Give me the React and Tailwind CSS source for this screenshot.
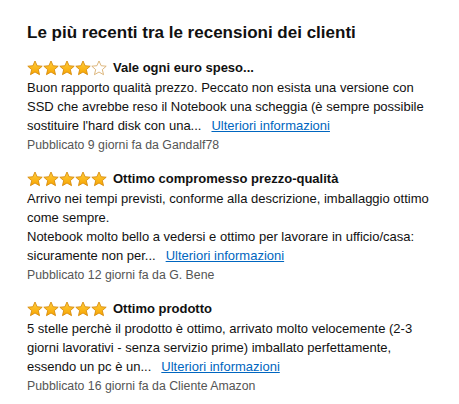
import React from 'react';

const reviews = [
  {
    rating: 4,
    title: 'Vale ogni euro speso...',
    lines: [
      'Buon rapporto qualità prezzo. Peccato non esista una versione con',
      "SSD che avrebbe reso il Notebook una scheggia (è sempre possibile",
      "sostituire l'hard disk con una...",
    ],
    meta: 'Pubblicato 9 giorni fa da Gandalf78',
  },
  {
    rating: 5,
    title: 'Ottimo compromesso prezzo-qualità',
    lines: [
      'Arrivo nei tempi previsti, conforme alla descrizione, imballaggio ottimo',
      'come sempre.',
      'Notebook molto bello a vedersi e ottimo per lavorare in ufficio/casa:',
      'sicuramente non per...',
    ],
    meta: 'Pubblicato 12 giorni fa da G. Bene',
  },
  {
    rating: 5,
    title: 'Ottimo prodotto',
    lines: [
      '5 stelle perchè il prodotto è ottimo, arrivato molto velocemente (2-3',
      'giorni lavorativi - senza servizio prime) imballato perfettamente,',
      'essendo un pc è un...',
    ],
    meta: 'Pubblicato 16 giorni fa da Cliente Amazon',
  },
];

const Star = ({ filled }) => (
  <svg width="16" height="16" viewBox="0 0 24 24" className="block">
    <defs>
      <linearGradient id="sg" x1="0" y1="0" x2="0" y2="1">
        <stop offset="0" stopColor="#ffce3d" />
        <stop offset="1" stopColor="#f7a400" />
      </linearGradient>
    </defs>
    <path
      d="M12 1.5l3.2 7.1 7.6.7-5.8 5.1 1.8 7.6L12 18l-6.8 4 1.8-7.6-5.8-5.1 7.6-.7z"
      fill={filled ? 'url(#sg)' : '#ffffff'}
      stroke={filled ? '#d58a0c' : '#d8ab6a'}
      strokeWidth="1.3"
      strokeLinejoin="round"
    />
  </svg>
);

const Stars = ({ rating }) => (
  <div className="flex">
    {[1, 2, 3, 4, 5].map((i) => (
      <Star key={i} filled={i <= rating} />
    ))}
  </div>
);

export default function App() {
  return (
    <div
      className="bg-white w-[459px] h-[404px] pl-[27px] pt-[22px] text-[#111]"
      style={{ fontFamily: '"Liberation Sans", Arial, sans-serif' }}
    >
      <h2 className="text-[17px] font-bold leading-[22px] mb-[14px]">
        Le più recenti tra le recensioni dei clienti
      </h2>
      <div className="flex flex-col gap-[15px]">
        {reviews.map((r, idx) => (
          <div key={idx}>
            <div className="flex items-center gap-[6px] h-[19px]">
              <Stars rating={r.rating} />
              <span className="text-[13px] font-bold">{r.title}</span>
            </div>
            <div className="text-[13px] leading-[19px] whitespace-nowrap mt-px">
              {r.lines.map((l, i) => (
                <div key={i}>
                  {l}
                  {i === r.lines.length - 1 && (
                    <a href="#" className="ml-[10px] text-[#0066c0] underline">
                      Ulteriori informazioni
                    </a>
                  )}
                </div>
              ))}
            </div>
            <div className="text-[12.3px] leading-[18px] text-[#555] mt-px">{r.meta}</div>
          </div>
        ))}
      </div>
    </div>
  );
}
